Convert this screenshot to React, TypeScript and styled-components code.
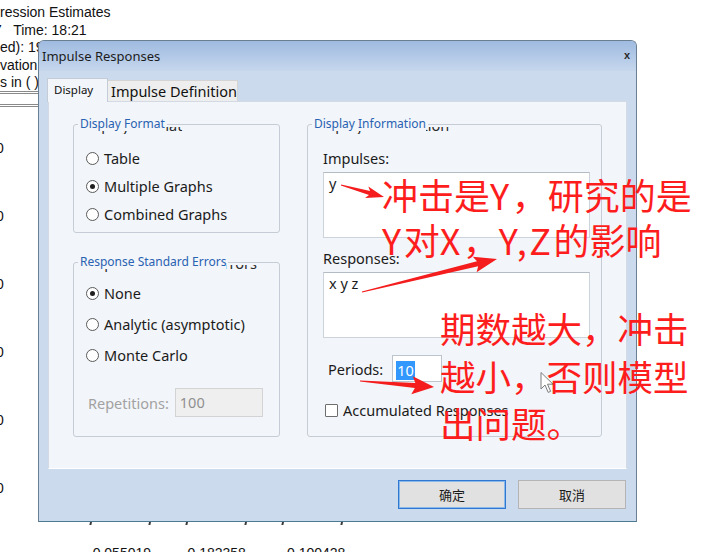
import styled, { createGlobalStyle } from 'styled-components';

type Pt = [number, number];

const GlobalStyle = createGlobalStyle`
  html, body {
    margin: 0;
    padding: 0;
  }
  body {
    width: 701px;
    height: 552px;
    overflow: hidden;
    background: #ffffff;
    font-family: 'Noto Sans', 'Liberation Sans', sans-serif;
  }
`;

const headerLines = ['ression Estimates', '7   Time: 18:21', 'ed): 19', 'vation', 's in ( )'];
const zeroMarks = [0, 1, 2, 3, 4, 5];
const bottomNumbers = ['-0.055019', '0.182358', '0.100428'];

const formatOptions = [
  { label: 'Table', checked: false },
  { label: 'Multiple Graphs', checked: true },
  { label: 'Combined Graphs', checked: false },
];

const errorOptions = [
  { label: 'None', checked: true },
  { label: 'Analytic (asymptotic)', checked: false },
  { label: 'Monte Carlo', checked: false },
];

const arrows: { tail: Pt; tip: Pt; head: number; half: number; shaft: number }[] = [
  { tail: [341, 185], tip: [384, 197], head: 15, half: 6, shaft: 2 },
  { tail: [362, 292], tip: [497, 259], head: 20, half: 8, shaft: 2.5 },
  { tail: [360, 381], tip: [434, 387], head: 19, half: 9, shaft: 2.5 },
];

const arrowPolygon = (tail: Pt, tip: Pt, headLen: number, headHalf: number, shaftHalf: number) => {
  const [x1, y1] = tail;
  const [x2, y2] = tip;
  const len = Math.hypot(x2 - x1, y2 - y1);
  const ux = (x2 - x1) / len;
  const uy = (y2 - y1) / len;
  const nx = -uy;
  const ny = ux;
  const bx = x2 - ux * headLen;
  const by = y2 - uy * headLen;
  // barbs sit a little behind the joint so the head looks swept back
  const hx = bx - ux * 3;
  const hy = by - uy * 3;
  const pts: Pt[] = [
    [x1 + nx * 0.5, y1 + ny * 0.5],
    [bx + nx * shaftHalf, by + ny * shaftHalf],
    [hx + nx * headHalf, hy + ny * headHalf],
    [x2, y2],
    [hx - nx * headHalf, hy - ny * headHalf],
    [bx - nx * shaftHalf, by - ny * shaftHalf],
    [x1 - nx * 0.5, y1 - ny * 0.5],
  ];
  return pts.map(([x, y]) => `${x.toFixed(1)},${y.toFixed(1)}`).join(' ');
};

const GroupLegend = ({ text }: { text: string }) => (
  <Legend>
    <LegendText>{text}</LegendText>
    <LegendGhost>{text}</LegendGhost>
  </Legend>
);

const App = () => {
  return (
    <Page>
      <GlobalStyle />

      <Doc>
        {headerLines.map((line, i) => (
          <HeaderLine key={i} $indent={i === 1 ? -6 : 0}>
            {line}
          </HeaderLine>
        ))}
        <DoubleRule $top={-1} />
        <DoubleRule $top={10} />
        <ZeroList>
          {zeroMarks.map((m) => (
            <ZeroMark key={m}>0</ZeroMark>
          ))}
        </ZeroList>
        <TickRow>
          {bottomNumbers.map((n) => (
            <TickPair key={n}>
              <Tick />
              <Tick />
            </TickPair>
          ))}
        </TickRow>
        <NumberRow>
          {bottomNumbers.map((n) => (
            <NumberCell key={n}>{n}</NumberCell>
          ))}
        </NumberRow>
      </Doc>

      <Window>
        <TitleBar>
          <TitleText>Impulse Responses</TitleText>
          <CloseGlyph>x</CloseGlyph>
        </TitleBar>

        <WindowBody>
          <TabRow>
            <Tab $active>Display</Tab>
            <Tab>Impulse Definition</Tab>
          </TabRow>

          <Panel>
            <LeftColumn>
              <Group>
                <GroupLegend text='Display Format' />
                <GroupBody $pad='13px 12px 4px'>
                  {formatOptions.map((o) => (
                    <OptionRow key={o.label} $h={28}>
                      <RadioDot $checked={o.checked} />
                      <OptionLabel>{o.label}</OptionLabel>
                    </OptionRow>
                  ))}
                </GroupBody>
              </Group>

              <Group>
                <GroupLegend text='Response Standard Errors' />
                <GroupBody $pad='9px 12px 19px'>
                  {errorOptions.map((o) => (
                    <OptionRow key={o.label} $h={31}>
                      <RadioDot $checked={o.checked} />
                      <OptionLabel>{o.label}</OptionLabel>
                    </OptionRow>
                  ))}
                  <RepRow>
                    <RepLabel>Repetitions:</RepLabel>
                    <RepInput>100</RepInput>
                  </RepRow>
                </GroupBody>
              </Group>
            </LeftColumn>

            <RightColumn>
              <Group>
                <GroupLegend text='Display Information' />
                <GroupBody $pad='18px 11px 16px 15px'>
                  <FieldLabel>Impulses:</FieldLabel>
                  <TextBox>y</TextBox>
                  <FieldLabel $top={11}>Responses:</FieldLabel>
                  <TextBox>x y z</TextBox>
                  <PeriodsRow>
                    <PeriodsLabel>Periods:</PeriodsLabel>
                    <PeriodsInput>
                      <Selection>10</Selection>
                    </PeriodsInput>
                  </PeriodsRow>
                  <CheckRow>
                    <CheckBox />
                    <OptionLabel>Accumulated Responses</OptionLabel>
                  </CheckRow>
                </GroupBody>
              </Group>
            </RightColumn>
          </Panel>

          <ButtonRow>
            <DialogButton $default>确定</DialogButton>
            <DialogButton>取消</DialogButton>
          </ButtonRow>
        </WindowBody>
      </Window>

      <Overlay viewBox='0 0 701 552'>
        {arrows.map((a, i) => (
          <polygon key={i} points={arrowPolygon(a.tail, a.tip, a.head, a.half, a.shaft)} fill='#f41c1c' />
        ))}
        <path
          d='M541 372.5 L541 389 L545 385 L548.2 392.4 L550.6 391.4 L547.5 384.2 L553 384.2 Z'
          fill='#ffffff'
          fillOpacity={0.9}
          stroke='#7c7c7c'
          strokeWidth={1}
          strokeLinejoin='round'
        />
      </Overlay>

      <Note $x={382} $y={172} $lh={45} $size={36}>
        冲击是<Latin>Y</Latin>，研究的是
        <br />
        <Latin>Y</Latin>对<Latin>X</Latin>，<Latin>Y,Z</Latin>的影响
      </Note>
      <Note $x={440} $y={304} $lh={47.5} $size={35.5}>
        期数越大，冲击
        <br />
        越小，否则模型
        <br />
        出问题。
      </Note>
    </Page>
  );
};

export default App;

const Page = styled.div`
  position: relative;
  width: 701px;
  height: 552px;
  overflow: hidden;
  background: #ffffff;
`;

/* regression output behind the dialog */
const Doc = styled.div`
  display: flex;
  flex-direction: column;
  padding-top: 4px;
  font-family: 'Liberation Sans', Arial, sans-serif;
  font-size: 14px;
  color: #111111;
`;

const HeaderLine = styled.div<{ $indent: number }>`
  height: 17.5px;
  line-height: 17.5px;
  white-space: pre;
  margin-left: ${(p) => p.$indent}px;
`;

const DoubleRule = styled.div<{ $top: number }>`
  width: 40px;
  height: 1px;
  margin-top: ${(p) => p.$top}px;
  border-top: 1px solid #8a8a8a;
  border-bottom: 1px solid #8a8a8a;
`;

const ZeroList = styled.div`
  display: flex;
  flex-direction: column;
  margin-top: 7.5px;
`;

const ZeroMark = styled.div`
  height: 68px;
  line-height: 68px;
  margin-left: -4px;
`;

const TickRow = styled.div`
  display: flex;
  gap: 36px;
  height: 6px;
  margin-top: -3px;
  padding-left: 90px;
`;

const TickPair = styled.div`
  display: flex;
  justify-content: space-between;
  width: 60px;
`;

const Tick = styled.span`
  width: 1.5px;
  height: 6px;
  background: #3a3a3a;
  transform: skewX(-12deg);
`;

const NumberRow = styled.div`
  display: flex;
  margin-top: 20px;
  padding-left: 88px;
  line-height: 17px;
`;

const NumberCell = styled.div`
  width: 99.5px;
`;

/* dialog window */
const Window = styled.div`
  position: absolute;
  left: 38px;
  top: 40px;
  width: 599px;
  height: 482px;
  box-sizing: border-box;
  display: flex;
  flex-direction: column;
  background: #cbdaed;
  border: 1px solid #6a7f92;
  border-bottom-color: #4d7a90;
  border-radius: 6px 6px 0 0;
  overflow: hidden;
`;

const TitleBar = styled.div`
  height: 30px;
  flex-shrink: 0;
  display: flex;
  align-items: center;
  justify-content: space-between;
  padding: 0 6px 0 3px;
  background: linear-gradient(180deg, #9fbbe0 0%, #b4cae8 55%, #c6d7ec 100%);
`;

const TitleText = styled.span`
  font-size: 13px;
  color: #1c1c1c;
`;

const CloseGlyph = styled.span`
  font-family: 'Liberation Sans', Arial, sans-serif;
  font-size: 11px;
  font-weight: bold;
  color: #2a2a2a;
  margin-top: -3px;
`;

const WindowBody = styled.div`
  display: flex;
  flex-direction: column;
  padding: 8px 9px 0 9px;
`;

const TabRow = styled.div`
  display: flex;
  align-items: flex-end;
  height: 22px;
  margin-left: -1px;
  position: relative;
  z-index: 1;
`;

const Tab = styled.div<{ $active?: boolean }>`
  box-sizing: border-box;
  display: flex;
  align-items: center;
  height: ${(p) => (p.$active ? 24 : 21)}px;
  margin-bottom: ${(p) => (p.$active ? -1 : 0)}px;
  padding: ${(p) => (p.$active ? '0 0 2px 6px' : '0 0 0 3px')};
  width: ${(p) => (p.$active ? 61 : 130)}px;
  font-size: ${(p) => (p.$active ? 11.5 : 14.5)}px;
  color: #111111;
  background: ${(p) => (p.$active ? '#f2f5f9' : '#eeeeee')};
  border: 1px solid ${(p) => (p.$active ? '#c3ccd7' : '#d4d4d4')};
  border-bottom: none;
  ${(p) => (p.$active ? '' : 'border-left: none;')}
`;

const Panel = styled.div`
  box-sizing: border-box;
  height: 368px;
  display: flex;
  gap: 27px;
  padding: 15px 0 0 24px;
  background: #f2f5f9;
  border: 1px solid #d3dae3;
  border-bottom-color: #ffffff;
`;

const LeftColumn = styled.div`
  width: 207px;
  display: flex;
  flex-direction: column;
  gap: 22px;
`;

const RightColumn = styled.div`
  width: 295px;
  display: flex;
  flex-direction: column;
`;

const Group = styled.fieldset`
  margin: 0;
  min-width: 0;
  padding: 0;
  border: 1px solid #c5ccd5;
  border-radius: 3px;
`;

const GroupBody = styled.div<{ $pad: string }>`
  display: flex;
  flex-direction: column;
  padding: ${(p) => p.$pad};
`;

const Legend = styled.legend`
  position: relative;
  margin-left: 4px;
  padding: 0 2px;
  font-size: 12px;
  line-height: 14px;
`;

const LegendText = styled.span`
  position: relative;
  z-index: 1;
  display: inline-block;
  color: #2962b2;
  background: #f2f5f9;
  white-space: nowrap;
`;

/* leftover frame of the video: a bigger dark copy peeking out */
const LegendGhost = styled.span`
  position: absolute;
  left: 2px;
  top: 0;
  z-index: 0;
  font-size: 14.5px;
  line-height: 17px;
  color: #2b2b2b;
  white-space: nowrap;
  clip-path: inset(10px 0 0 0);
`;

const OptionRow = styled.div<{ $h: number }>`
  height: ${(p) => p.$h}px;
  display: flex;
  align-items: center;
  gap: 5px;
`;

const RadioDot = styled.span<{ $checked: boolean }>`
  box-sizing: border-box;
  width: 13px;
  height: 13px;
  border-radius: 50%;
  border: 1px solid #5a5a5a;
  background: #ffffff;
  display: flex;
  align-items: center;
  justify-content: center;
  &::after {
    content: '';
    width: 5px;
    height: 5px;
    border-radius: 50%;
    background: ${(p) => (p.$checked ? '#1f1f1f' : 'transparent')};
  }
`;

const OptionLabel = styled.span`
  font-size: 14.5px;
  line-height: 19px;
  color: #1b1b1b;
  white-space: nowrap;
`;

const RepRow = styled.div`
  display: flex;
  align-items: center;
  gap: 6px;
  margin-top: 17px;
  padding-left: 2px;
`;

const RepLabel = styled.span`
  font-size: 14.5px;
  color: #a2a2a2;
`;

const RepInput = styled.div`
  box-sizing: border-box;
  width: 88px;
  height: 29px;
  padding: 3px 0 0 4px;
  font-size: 14.5px;
  color: #8f8f8f;
  background: #efefef;
  border: 1px solid #d3d3d3;
`;

const FieldLabel = styled.div<{ $top?: number }>`
  font-size: 14.5px;
  line-height: 19px;
  color: #1b1b1b;
  margin-top: ${(p) => p.$top ?? 0}px;
  margin-bottom: 4px;
`;

const TextBox = styled.div`
  box-sizing: border-box;
  height: 66px;
  padding: 1px 5px;
  font-size: 14.5px;
  line-height: 19px;
  color: #1b1b1b;
  background: #ffffff;
  border: 1px solid #cdd3da;
  border-top-color: #b3bbc5;
`;

const PeriodsRow = styled.div`
  display: flex;
  align-items: center;
  gap: 9px;
  margin-top: 17px;
  padding-left: 5px;
`;

const PeriodsLabel = styled.span`
  font-size: 14.5px;
  color: #1b1b1b;
`;

const PeriodsInput = styled.div`
  box-sizing: border-box;
  width: 50px;
  height: 27px;
  padding: 3px 0 0 3px;
  background: #ffffff;
  border: 1px solid #bcc4ce;
`;

const Selection = styled.span`
  display: inline-block;
  padding: 0 1px;
  font-size: 14.5px;
  line-height: 19px;
  color: #ffffff;
  background: #3298fe;
`;

const CheckRow = styled.div`
  display: flex;
  align-items: center;
  gap: 5px;
  margin-top: 19px;
  padding-left: 2px;
`;

const CheckBox = styled.span`
  box-sizing: border-box;
  width: 13px;
  height: 13px;
  border: 1px solid #6d6d6d;
  border-radius: 1px;
  background: #ffffff;
`;

const ButtonRow = styled.div`
  display: flex;
  justify-content: flex-end;
  gap: 12px;
  margin-top: 11px;
  padding-right: 1px;
`;

const DialogButton = styled.div<{ $default?: boolean }>`
  box-sizing: border-box;
  width: 108px;
  height: 29px;
  display: flex;
  align-items: center;
  justify-content: center;
  font-family: 'Noto Sans CJK SC', 'Noto Sans', sans-serif;
  font-size: 13px;
  color: #1a1a1a;
  background: #e1e1e1;
  border: 1px solid ${(p) => (p.$default ? '#2f78d2' : '#b4b4b4')};
  box-shadow: ${(p) => (p.$default ? 'inset 0 0 0 1px #8ab8ea' : 'none')};
`;

/* red annotations drawn over the screenshot */
const Overlay = styled.svg`
  position: absolute;
  left: 0;
  top: 0;
  width: 701px;
  height: 552px;
  pointer-events: none;
`;

const Note = styled.div<{ $x: number; $y: number; $lh: number; $size: number }>`
  position: absolute;
  left: ${(p) => p.$x}px;
  top: ${(p) => p.$y}px;
  font-family: 'Noto Sans CJK SC', 'Noto Sans', sans-serif;
  font-size: ${(p) => p.$size}px;
  line-height: ${(p) => p.$lh}px;
  color: #fd1d1d;
  white-space: nowrap;
`;

const Latin = styled.span`
  letter-spacing: 2.5px;
`;
